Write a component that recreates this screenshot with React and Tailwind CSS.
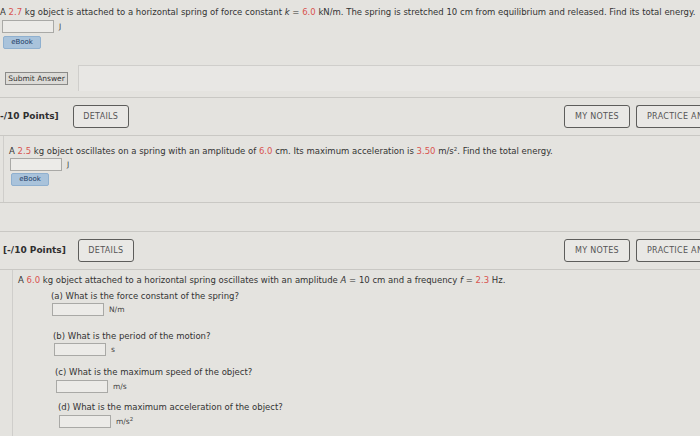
import React from "react";

const font = { fontFamily: '"DejaVu Sans", Verdana, sans-serif' };

const Red = ({ children }) => <span className="text-[#d9534f]">{children}</span>;

const AnswerBox = ({ unit, className = "" }) => (
  <div className={`flex items-center ${className}`}>
    <div className="w-[52px] h-[13px] border border-[#a9a9a6] bg-[#ecebe8]" />
    <span className="ml-[5px] text-[7.5px] text-[#444]">{unit}</span>
  </div>
);

const EBook = ({ className = "" }) => (
  <div
    className={`w-[38px] h-[13px] flex items-center justify-center rounded-[2px] bg-[#a9c3db] border border-[#8fb0cf] text-[7px] text-[#1f3d66] ${className}`}
  >
    eBook
  </div>
);

const OutlineButton = ({ children, className = "" }) => (
  <div
    className={`h-[23px] flex items-center justify-center rounded-[3px] border-[1.5px] border-[#5d5d5b] bg-[#e9e8e5] text-[8px] text-[#555] tracking-[0.3px] ${className}`}
  >
    {children}
  </div>
);

const Header = ({ label, detailsGap, pad }) => (
  <div className={`h-[37px] flex items-center ${pad}`}>
    <span className="text-[9px] font-bold text-[#2f2f2f]">{label}</span>
    <OutlineButton className={`w-[56px] ${detailsGap}`}>DETAILS</OutlineButton>
    <div className="flex-1" />
    <OutlineButton className="w-[66px]">MY NOTES</OutlineButton>
    <OutlineButton className="ml-[6px] w-[64px] justify-start pl-[10px] whitespace-nowrap overflow-hidden rounded-r-none border-r-0">
      PRACTICE AN
    </OutlineButton>
  </div>
);

export default function App() {
  return (
    <div
      className="w-[700px] h-[436px] overflow-hidden bg-[#e4e3df] text-[#333] text-[8.5px]"
      style={font}
    >
      {/* previous question tail */}
      <div className="pt-[7px]">
        <p className="whitespace-nowrap leading-[10px]">
          A <Red>2.7</Red> kg object is attached to a horizontal spring of force constant <i>k</i> = <Red>6.0</Red> kN/m. The spring is stretched 10 cm from equilibrium and released. Find its total energy.
        </p>
        <AnswerBox unit="J" className="mt-[3px] ml-[2px]" />
        <EBook className="mt-[3px] ml-[3px]" />
        <div className="mt-[16px] flex">
          <div className="w-[78px] pt-[7px] pl-[5px]">
            <div className="w-[63px] h-[13px] flex items-center justify-center border border-[#8a8a88] bg-[#dcdbd7] text-[7.5px] text-[#333]">
              Submit Answer
            </div>
          </div>
          <div className="flex-1 h-[26px] border-t border-l border-[#cfcecb] bg-[#e8e7e4]" />
        </div>
        <div className="mt-[6px] border-t border-[#c9c8c4]" />
      </div>

      {/* question 2 */}
      <Header label="-/10 Points]" detailsGap="ml-[14px]" pad="pr-0" />
      <div className="border-t border-[#c9c8c4]">
        <div className="border-l border-[#cfcecb] ml-[3px] h-[66px] pl-[5px] pt-[10px]">
          <p className="whitespace-nowrap leading-[10px]">
            A <Red>2.5</Red> kg object oscillates on a spring with an amplitude of <Red>6.0</Red> cm. Its maximum acceleration is <Red>3.50</Red> m/s<sup className="text-[5.5px]">2</sup>. Find the total energy.
          </p>
          <AnswerBox unit="J" className="mt-[2px] ml-[1px]" />
          <EBook className="mt-[2px] ml-[2px]" />
        </div>
      </div>
      <div className="border-t border-[#c9c8c4] h-[29px]" />

      {/* question 3 */}
      <div className="border-t border-[#c9c8c4]">
        <Header label="[-/10 Points]" detailsGap="ml-[12px]" pad="pl-[3px]" />
      </div>
      <div className="border-t border-[#c9c8c4]">
        <div className="ml-[12px] border-l border-[#cfcecb] h-[170px] pl-[5px] pt-[5px]">
          <p className="whitespace-nowrap leading-[10px]">
            A <Red>6.0</Red> kg object attached to a horizontal spring oscillates with an amplitude <i>A</i> = 10 cm and a frequency <i>f</i> = <Red>2.3</Red> Hz.
          </p>
          <div className="ml-[33px] mt-[6px]">
            <p className="leading-[10px]">(a) What is the force constant of the spring?</p>
            <AnswerBox unit="N/m" className="mt-[2px] ml-[1px]" />
          </div>
          <div className="ml-[35px] mt-[15px]">
            <p className="leading-[10px]">(b) What is the period of the motion?</p>
            <AnswerBox unit="s" className="mt-[2px] ml-[1px]" />
          </div>
          <div className="ml-[37px] mt-[11px]">
            <p className="leading-[10px]">(c) What is the maximum speed of the object?</p>
            <AnswerBox unit="m/s" className="mt-[3px] ml-[1px]" />
          </div>
          <div className="ml-[40px] mt-[9px]">
            <p className="leading-[10px]">(d) What is the maximum acceleration of the object?</p>
            <AnswerBox
              unit={
                <>
                  m/s<sup className="text-[5.5px]">2</sup>
                </>
              }
              className="mt-[3px] ml-[1px]"
            />
          </div>
        </div>
      </div>
    </div>
  );
}
